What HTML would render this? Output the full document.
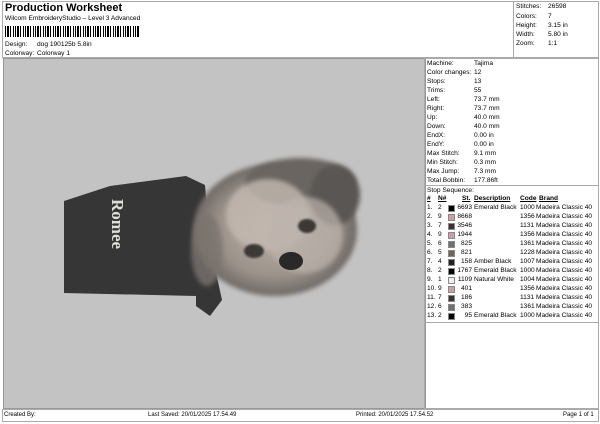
<!DOCTYPE html>
<html><head><style>
body{margin:0;width:600px;height:424px;background:#fff;font-family:"Liberation Sans",sans-serif;position:relative;overflow:hidden;color:#000}
.a{position:absolute;font-size:6.6px;white-space:nowrap;line-height:8px}
.bx{position:absolute;border:1px solid #999}
</style></head><body>
<div class="bx" style="left:2px;top:1px;width:595px;height:55px;border-color:#aaa"></div>
<div class="bx" style="left:513px;top:1px;width:84px;height:55px;border-color:#aaa"></div>
<div class="a" style="left:5px;top:2px;font-size:11px;font-weight:bold;line-height:13px">Production Worksheet</div>
<div class="a" style="left:5px;top:15px">Wilcom EmbroideryStudio – Level 3 Advanced</div>
<div style="position:absolute;left:5px;top:26px;width:135px;height:11px;background:repeating-linear-gradient(90deg,#000 0 1px,#fff 1px 2px,#000 2px 4px,#fff 4px 5px,#000 5px 6px,#fff 6px 8px,#000 8px 9px,#fff 9px 10px)"></div>
<div class="a" style="left:5px;top:41px">Design:</div><div class="a" style="left:37px;top:41px">dog 190125b 5.8in</div>
<div class="a" style="left:5px;top:50px">Colorway:</div><div class="a" style="left:37px;top:50px">Colorway 1</div>
<div class="a" style="left:516px;top:3px">Stitches:</div><div class="a" style="left:548px;top:3px">26598</div>
<div class="a" style="left:516px;top:13px">Colors:</div><div class="a" style="left:548px;top:13px">7</div>
<div class="a" style="left:516px;top:22px">Height:</div><div class="a" style="left:548px;top:22px">3.15 in</div>
<div class="a" style="left:516px;top:31px">Width:</div><div class="a" style="left:548px;top:31px">5.80 in</div>
<div class="a" style="left:516px;top:40px">Zoom:</div><div class="a" style="left:548px;top:40px">1:1</div>

<div style="position:absolute;left:3px;top:58px;width:421px;height:349px;background:#c3c3c3;border:1px solid #999"></div>
<div class="bx" style="left:424px;top:58px;width:173px;height:349px;border-color:#aaa"></div>
<div style="position:absolute;left:424px;top:185px;width:174px;border-top:1px solid #aaa"></div>
<div style="position:absolute;left:424px;top:322px;width:174px;border-top:1px solid #aaa"></div>

<svg style="position:absolute;left:0;top:0" width="600" height="424">
<defs>
<filter id="b" x="-20%" y="-20%" width="140%" height="140%"><feGaussianBlur stdDeviation="2.5"/></filter>
<filter id="b1"><feGaussianBlur stdDeviation="1"/></filter>
<radialGradient id="f" cx="0.5" cy="0.5" r="0.5"><stop offset="0" stop-color="#bcb2aa"/><stop offset="0.7" stop-color="#9b928a"/><stop offset="1" stop-color="#6e6864"/></radialGradient>
</defs>
<path d="M64 201 L110 186 L186 176 L205 185 L210 245 L222 300 L210 316 L196 306 L196 296 L64 293 Z" fill="#363636"/>
<ellipse cx="275" cy="230" rx="82" ry="66" fill="url(#f)" filter="url(#b)"/>
<ellipse cx="300" cy="182" rx="55" ry="24" fill="#6a6560" filter="url(#b)"/>
<ellipse cx="335" cy="195" rx="25" ry="30" fill="#5a5652" filter="url(#b)"/>
<ellipse cx="268" cy="215" rx="42" ry="36" fill="#c4bab2" filter="url(#b)" opacity="0.8"/>
<ellipse cx="305" cy="235" rx="38" ry="38" fill="#bdb4ad" filter="url(#b)" opacity="0.7"/>
<ellipse cx="207" cy="250" rx="16" ry="36" fill="#7a736e" filter="url(#b)" opacity="0.8"/>
<ellipse cx="307" cy="226" rx="9" ry="7" fill="#3a3836" filter="url(#b1)"/>
<ellipse cx="254" cy="251" rx="10" ry="7" fill="#3a3836" filter="url(#b1)"/>
<ellipse cx="291" cy="261" rx="12" ry="9" fill="#2a2828"/>
<text x="0" y="0" transform="translate(112,199) rotate(90)" font-family="Liberation Serif,serif" font-weight="bold" font-size="17" fill="#e0e0d8">Romee</text>
</svg>

<div class="a" style="left:427px;top:60px">Machine:</div><div class="a" style="left:474px;top:60px">Tajima</div>
<div class="a" style="left:427px;top:69px">Color changes:</div><div class="a" style="left:474px;top:69px">12</div>
<div class="a" style="left:427px;top:78px">Stops:</div><div class="a" style="left:474px;top:78px">13</div>
<div class="a" style="left:427px;top:87px">Trims:</div><div class="a" style="left:474px;top:87px">55</div>
<div class="a" style="left:427px;top:96px">Left:</div><div class="a" style="left:474px;top:96px">73.7 mm</div>
<div class="a" style="left:427px;top:105px">Right:</div><div class="a" style="left:474px;top:105px">73.7 mm</div>
<div class="a" style="left:427px;top:114px">Up:</div><div class="a" style="left:474px;top:114px">40.0 mm</div>
<div class="a" style="left:427px;top:123px">Down:</div><div class="a" style="left:474px;top:123px">40.0 mm</div>
<div class="a" style="left:427px;top:132px">EndX:</div><div class="a" style="left:474px;top:132px">0.00 in</div>
<div class="a" style="left:427px;top:141px">EndY:</div><div class="a" style="left:474px;top:141px">0.00 in</div>
<div class="a" style="left:427px;top:150px">Max Stitch:</div><div class="a" style="left:474px;top:150px">9.1 mm</div>
<div class="a" style="left:427px;top:159px">Min Stitch:</div><div class="a" style="left:474px;top:159px">0.3 mm</div>
<div class="a" style="left:427px;top:168px">Max Jump:</div><div class="a" style="left:474px;top:168px">7.3 mm</div>
<div class="a" style="left:427px;top:177px">Total Bobbin:</div><div class="a" style="left:474px;top:177px">177.86ft</div>
<div class="a" style="left:427px;top:187px">Stop Sequence:</div>
<div class="a" style="left:427px;top:195px;font-weight:bold;text-decoration:underline">#</div>
<div class="a" style="left:438px;top:195px;font-weight:bold;text-decoration:underline">N#</div>
<div class="a" style="left:462px;top:195px;font-weight:bold;text-decoration:underline">St.</div>
<div class="a" style="left:474px;top:195px;font-weight:bold;text-decoration:underline">Description</div>
<div class="a" style="left:520px;top:195px;font-weight:bold;text-decoration:underline">Code</div>
<div class="a" style="left:539px;top:195px;font-weight:bold;text-decoration:underline">Brand</div>
<div id="rows"></div>
<script>
var d=[["1.","2","#000","6693","Emerald Black","1000"],["2.","9","#c9a0a8","8668","","1356"],["3.","7","#3a3230","3546","","1131"],["4.","9","#c9a0a8","1944","","1356"],["5.","6","#707070","825","","1361"],["6.","5","#6e665c","821","","1228"],["7.","4","#222","158","Amber Black","1007"],["8.","2","#000","1767","Emerald Black","1000"],["9.","1","#f0f0f0","1109","Natural White","1004"],["10.","9","#c9a0a8","401","","1356"],["11.","7","#3a3230","186","","1131"],["12.","6","#707070","383","","1361"],["13.","2","#000","95","Emerald Black","1000"]];
var h="";d.forEach(function(r,i){var y=204+i*9;
h+='<div class="a" style="left:427px;top:'+y+'px">'+r[0]+'</div><div class="a" style="left:438px;top:'+y+'px">'+r[1]+'</div>'+
'<div style="position:absolute;left:448px;top:'+(y+1)+'px;width:5px;height:5px;background:'+r[2]+';border:1px solid #888"></div>'+
'<div class="a" style="left:455px;top:'+y+'px;width:17px;text-align:right">'+r[3]+'</div><div class="a" style="left:474px;top:'+y+'px">'+r[4]+'</div>'+
'<div class="a" style="left:520px;top:'+y+'px">'+r[5]+'</div><div class="a" style="left:536px;top:'+y+'px">Madeira Classic 40</div>';});
document.getElementById("rows").innerHTML=h;
</script>
<div class="bx" style="left:2px;top:409px;width:595px;height:11px;border-color:#aaa"></div>
<div class="a" style="left:4px;top:411px;font-size:6px">Created By:</div>
<div class="a" style="left:148px;top:411px;font-size:6px">Last Saved: 20/01/2025 17.54.49</div>
<div class="a" style="left:356px;top:411px;font-size:6px">Printed: 20/01/2025 17.54.52</div>
<div class="a" style="left:563px;top:411px;font-size:6px">Page 1 of 1</div>
</body></html>
